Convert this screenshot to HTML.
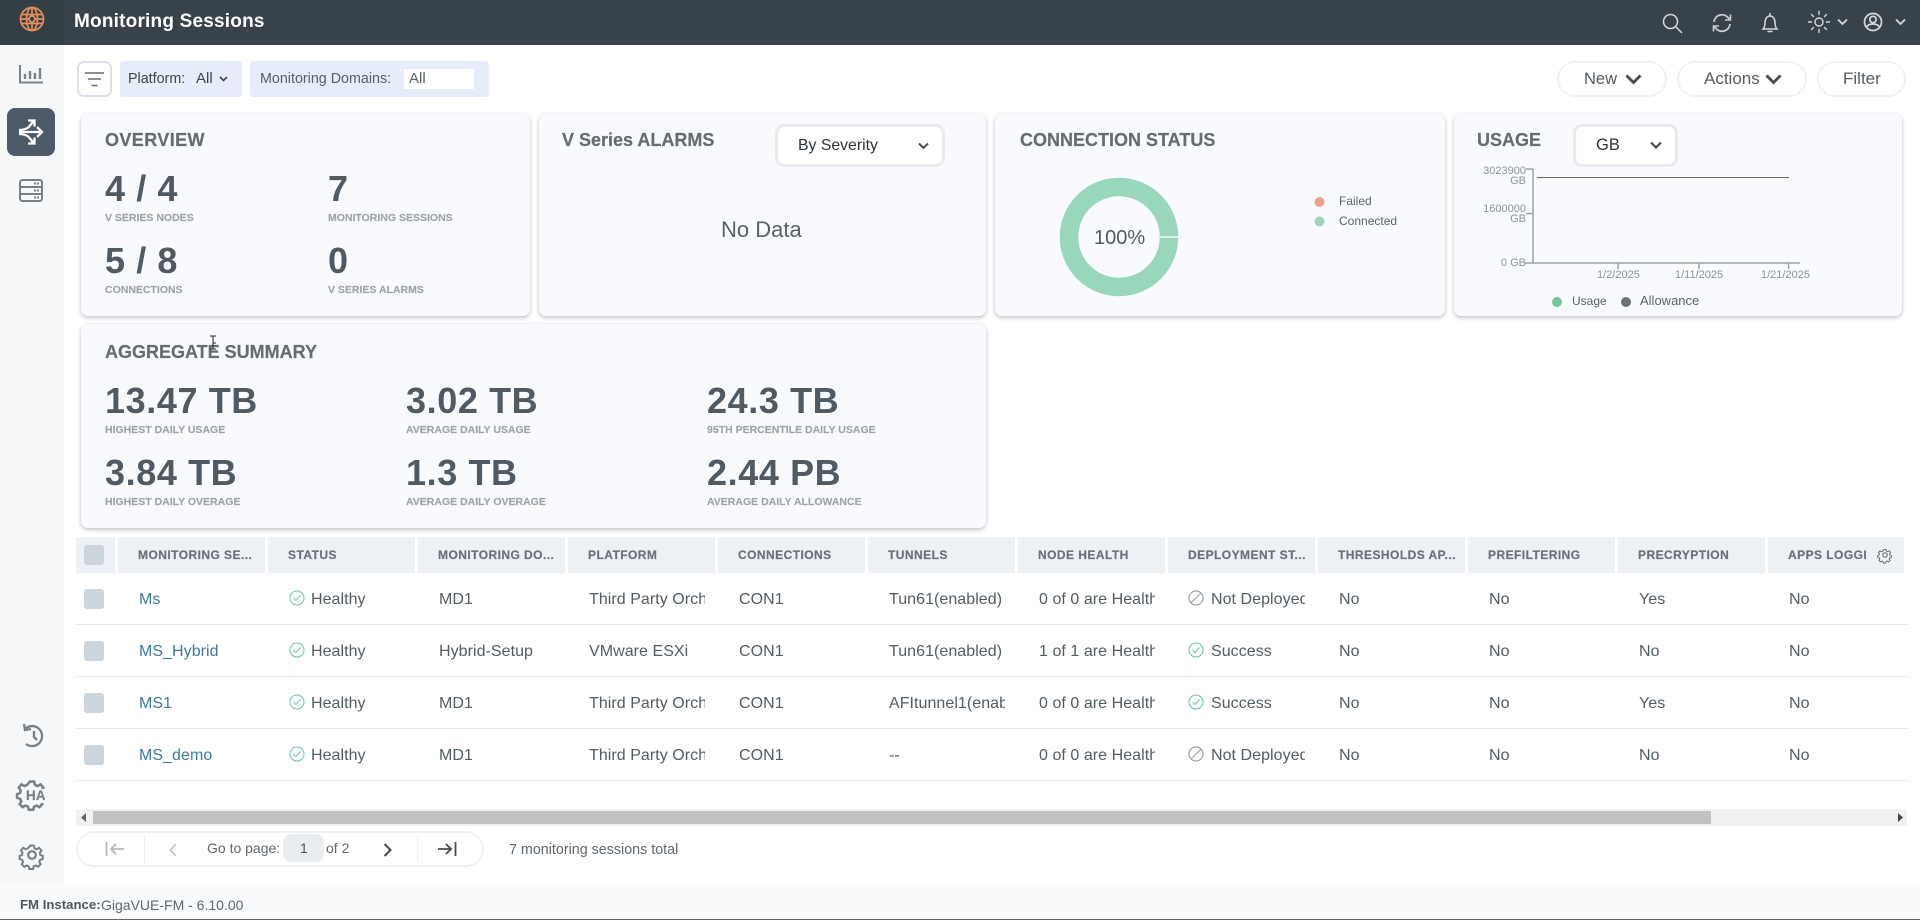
<!DOCTYPE html>
<html><head><meta charset="utf-8"><title>Monitoring Sessions</title>
<style>
html,body{margin:0;padding:0;width:1920px;height:920px;overflow:hidden;background:#fff;font-family:"Liberation Sans",sans-serif;color:#525c63}
div,span,a{position:absolute;white-space:nowrap;display:block}
svg{position:absolute;overflow:visible}
.t{line-height:20px;height:20px}
.card{background:#f9fafd;border-radius:7px;box-shadow:0 2px 4px rgba(60,70,80,.28),0 0 3px rgba(60,70,80,.08)}
.h{font-weight:bold;font-size:18px;color:#666c72;line-height:20px;height:20px;-webkit-text-stroke:.2px #666c72}
.v{font-weight:bold;font-size:36px;color:#4f5a64;line-height:40px;height:40px;letter-spacing:.6px}
.l{font-weight:bold;font-size:10.5px;color:#a0a4aa;line-height:14px;height:14px;-webkit-text-stroke:.15px #a0a4aa}
.sel{background:#fff;border:3px solid #e8eaef;border-radius:9px;box-sizing:border-box}
.pill{background:#fff;border:2px solid #f0f1f5;border-radius:18px;box-sizing:border-box}
.btn{font-size:17px;color:#555c63;line-height:20px;height:20px}
.th{top:537px;height:36px;background:#edf1f6}
.tht{font-weight:bold;font-size:12px;color:#6a7178;line-height:20px;top:545px;height:20px;letter-spacing:.45px;-webkit-text-stroke:.2px #6a7178}
.c{font-size:16px;letter-spacing:.05px;color:#525c63;line-height:20px;height:20px;overflow:hidden}
.a{color:#3d7a9e}
.cb{left:84px;width:20px;height:20px;background:#ccd5dc;border-radius:3px}
.sep{left:76px;width:1832px;height:1px;background:#e7e9ec}
.y{font-size:11px;color:#8b939a;line-height:12px;height:12px;text-align:right;width:60px;left:1466px}
.x{font-size:11px;color:#8b939a;line-height:12px;height:12px}
</style></head><body>

<!-- top bar -->
<div style="left:0;top:0;width:1920px;height:45px;background:#37424a"></div>
<div style="left:0;top:0;width:64px;height:45px;background:#333e45"></div>
<svg style="left:19px;top:6px" width="26" height="26" viewBox="0 0 26 26" fill="none" stroke="#e58f5c" stroke-width="1.7"><circle cx="13" cy="13" r="11.5"/><ellipse cx="13" cy="13" rx="5.5" ry="11.5"/><path d="M2.5 8.5h21M2.5 17.5h21M13 1.5v8M13 16.5v8M1.5 13h8M16.5 13h8"/><circle cx="13" cy="13" r="3"/></svg>
<div class="t" style="left:74px;top:12px;color:#fff;font-weight:bold;font-size:19px;letter-spacing:.2px">Monitoring Sessions</div>

<svg style="left:1660px;top:11px" width="24" height="24" viewBox="0 0 24 24" fill="none" stroke="#d5d9dc" stroke-width="1.500"><circle cx="10.5" cy="10.5" r="7"/><path d="M15.5 15.5l6 6" stroke-linecap="round"/></svg>
<svg style="left:1710px;top:11px" width="24" height="24" viewBox="0 0 24 24" fill="none" stroke="#c9ced2" stroke-width="1.800"><path d="M4 11a8 8 0 0 1 14-4.5l2 2M20 13a8 8 0 0 1-14 4.5l-2-2"/><path d="M20.500 3.500v5.500h-5.500M3.500 20.500v-5.500h5.500" stroke-width="1.600"/></svg>
<svg style="left:1758px;top:11px" width="24" height="24" viewBox="0 0 24 24" fill="none" stroke="#d5d9dc" stroke-width="1.500"><path d="M5 18c1.500-1.500 2-3 2-6.500 0-3.500 2-6.500 5-6.500s5 3 5 6.500c0 3.500 .5 5 2 6.500z"/><path d="M12 2.500v2.500M10 20.500h4" stroke-linecap="round"/></svg>
<svg style="left:1807px;top:10px" width="24" height="24" viewBox="0 0 24 24" fill="none" stroke="#d5d9dc" stroke-width="1.400" stroke-linecap="round"><circle cx="12" cy="12" r="4"/><path d="M12 1.500v3M12 19.500v3M1.500 12h3M19.500 12h3M4.500 4.500l2 2M17.500 17.500l2 2M4.500 19.500l2-2M17.500 6.500l2-2"/></svg>
<svg style="left:1837px;top:18px" width="11" height="8" viewBox="0 0 11 8" fill="none" stroke="#d5d9dc" stroke-width="1.800"><path d="M1 1.500l4.500 4.500 4.500-4.500"/></svg>
<svg style="left:1861px;top:10px" width="24" height="24" viewBox="0 0 24 24" fill="none" stroke="#d5d9dc" stroke-width="1.700"><circle cx="12" cy="12" r="8.500"/><circle cx="12" cy="9.500" r="3.200"/><path d="M5.500 17c1.500-2.500 4-3 6.500-3s5 .5 6.500 3"/></svg>
<svg style="left:1895px;top:18px" width="11" height="8" viewBox="0 0 11 8" fill="none" stroke="#d5d9dc" stroke-width="1.800"><path d="M1 1.500l4.500 4.500 4.500-4.500"/></svg>

<!-- sidebar -->
<div style="left:0;top:45px;width:64px;height:839px;background:#f6f7f9"></div>
<svg style="left:19px;top:65px" width="24" height="19" viewBox="0 0 24 19" fill="none" stroke="#7b8288" stroke-width="2"><path d="M1 0v17.500h23"/><path d="M6 14v-5M11 14V6M16 14V8M21 14V3" stroke-width="2.400"/></svg>
<div style="left:7px;top:108px;width:48px;height:48px;border-radius:8px;background:#4d5b68"></div>
<svg style="left:19px;top:119px" width="24" height="26" viewBox="0 0 24 26" fill="none" stroke="#fff" stroke-width="2.300"><path d="M0 13h23M18 8l5 5-5 5"/><path d="M0 11c5 0 9-1.500 11-4.500L15 1.500M9 1.500h6.500v6"/><path d="M0 15c5 0 9 1.500 11 4.500l4 5M9 24.500h6.500v-6"/></svg>
<svg style="left:19px;top:179px" width="24" height="23" viewBox="0 0 24 23" fill="none" stroke="#787f86" stroke-width="2"><rect x="1" y="1" width="22" height="21" rx="2.500"/><path d="M1 8h22M1 15h22"/><path d="M15 4.500h5M15 11.500h5M15 18.500h5" stroke-dasharray="2 1"/></svg>
<svg style="left:22px;top:723px" width="24" height="26" viewBox="0 0 24 26" fill="none" stroke="#787f86" stroke-width="2.300"><path d="M3 6a10 10 0 1 1 1 15"/><path d="M2 1l1 6 6-1"/><path d="M12 8v6l3 3"/></svg>
<svg style="left:19px;top:780px" width="26" height="26" viewBox="0 0 24 24" fill="none" stroke="#787f86" stroke-width="2.300"><path d="M10 1.500h4l.7 3 2.500 1.100 2.700-1.600 2.600 3-1.800 2.500.5 2.500 2.800 1v3.500l-2.900.9-1 2.300 1.500 2.600-2.800 2.800-2.600-1.500-2.300 1-.8 2.900h-4l-.8-2.900-2.300-1-2.600 1.500-2.800-2.800 1.500-2.600-1-2.300-2.900-.9v-3.500l2.800-1 .5-2.500-1.800-2.500 2.600-3 2.700 1.600 2.500-1.100z"/></svg>
<div style="left:24px;top:789px;width:24px;height:14px;background:#f6f7f9"></div>
<div style="left:26px;top:789px;font-size:13.500px;font-weight:bold;color:#787f86;line-height:14px;-webkit-text-stroke:.2px #787f86">HA</div>
<svg style="left:20px;top:843px" width="24" height="24" viewBox="0 0 24 24" fill="none" stroke="#787f86" stroke-width="2.200"><path d="M10 1.500h4l.7 3 2.500 1.100 2.700-1.600 2.600 3-1.800 2.500.5 2.500 2.800 1v3.500l-2.900.9-1 2.300 1.500 2.600-2.800 2.800-2.600-1.500-2.300 1-.8 2.900h-4l-.8-2.900-2.300-1-2.600 1.500-2.800-2.800 1.500-2.600-1-2.300-2.900-.9v-3.500l2.800-1 .5-2.500-1.800-2.500 2.600-3 2.700 1.600 2.500-1.100z" transform="translate(1.200 1.200) scale(.9)"/><circle cx="12" cy="12" r="3.800"/></svg>

<!-- toolbar -->
<div style="left:77px;top:61px;width:35px;height:36px;box-sizing:border-box;background:#fff;border:2.500px solid #dbe1ea;border-radius:7px"></div>
<svg style="left:85px;top:72px" width="19" height="15" viewBox="0 0 19 15" fill="none" stroke="#666c72" stroke-width="1.600"><path d="M0 1h19M3 7h13M6.500 13.500h6"/></svg>
<div style="left:120px;top:61px;width:122px;height:36px;background:#e6ecfa;border-radius:3px"></div>
<div class="t" style="left:128px;top:69px;font-size:14.300px;color:#3d464d">Platform:</div>
<div class="t" style="left:196px;top:69px;font-size:15px;color:#3d464d">All</div>
<svg style="left:219px;top:76px" width="9" height="7" viewBox="0 0 9 7" fill="none" stroke="#3d464d" stroke-width="1.600"><path d="M1 1l3.500 3.500L8 1"/></svg>
<div style="left:250px;top:61px;width:239px;height:36px;background:#e6ecfa;border-radius:3px"></div>
<div class="t" style="left:260px;top:69px;font-size:14.300px;color:#55606c">Monitoring Domains:</div>
<div style="left:404px;top:69px;width:70px;height:20px;background:#fff"></div>
<div class="t" style="left:409px;top:69px;font-size:15px;color:#55606c">All</div>

<div class="pill" style="left:1557px;top:61px;width:110px;height:36px"></div>
<div class="btn" style="left:1584px;top:69px;font-size:16.500px">New</div>
<svg style="left:1625px;top:74px" width="17" height="11" viewBox="0 0 17 11" fill="none" stroke="#444c53" stroke-width="2.800"><path d="M1.500 1.500l7 7 7-7"/></svg>
<div class="pill" style="left:1677px;top:61px;width:130px;height:36px"></div>
<div class="btn" style="left:1704px;top:69px">Actions</div>
<svg style="left:1765px;top:74px" width="17" height="11" viewBox="0 0 17 11" fill="none" stroke="#444c53" stroke-width="2.800"><path d="M1.500 1.500l7 7 7-7"/></svg>
<div class="pill" style="left:1817px;top:61px;width:89px;height:36px"></div>
<div class="btn" style="left:1843px;top:69px">Filter</div>

<!-- overview -->
<div class="card" style="left:81px;top:114px;width:449px;height:202px"></div>
<div class="h" style="left:105px;top:130px;letter-spacing:.4px">OVERVIEW</div>
<div class="v" style="left:105px;top:169px">4 / 4</div>
<div class="l" style="left:105px;top:211px">V SERIES NODES</div>
<div class="v" style="left:328px;top:169px">7</div>
<div class="l" style="left:328px;top:211px">MONITORING SESSIONS</div>
<div class="v" style="left:105px;top:241px">5 / 8</div>
<div class="l" style="left:105px;top:283px">CONNECTIONS</div>
<div class="v" style="left:328px;top:241px">0</div>
<div class="l" style="left:328px;top:283px">V SERIES ALARMS</div>

<!-- alarms -->
<div class="card" style="left:539px;top:114px;width:447px;height:202px"></div>
<div class="h" style="left:562px;top:130px">V Series ALARMS</div>
<div class="sel" style="left:775px;top:124px;width:170px;height:43px"></div>
<div class="t" style="left:798px;top:136px;font-size:15.800px;color:#2d3338">By Severity</div>
<svg style="left:918px;top:142px" width="11" height="8" viewBox="0 0 11 8" fill="none" stroke="#444c53" stroke-width="2"><path d="M1 1.500l4.500 4.500 4.500-4.500"/></svg>
<div class="t" style="left:721px;top:220px;font-size:22px;color:#58616a">No Data</div>

<!-- connection status -->
<div class="card" style="left:995px;top:114px;width:450px;height:202px"></div>
<div class="h" style="left:1020px;top:130px">CONNECTION STATUS</div>
<svg style="left:1050px;top:167px" width="140" height="140" viewBox="0 0 140 140"><circle cx="69" cy="70" r="50" fill="none" stroke="#98d7bc" stroke-width="18.500"/><path d="M110 70h19" stroke="#f0f6f3" stroke-width="1.500"/></svg>
<div class="t" style="left:1094px;top:228px;font-size:20px;width:50px;text-align:center;color:#4f5a64">100%</div>
<svg style="left:1314px;top:196px" width="12" height="32"><circle cx="5.500" cy="6" r="5" fill="#f4a08f"/><circle cx="5.500" cy="25.500" r="5" fill="#98d7bc"/></svg>
<div class="t" style="left:1339px;top:191px;font-size:12px;color:#5a6269">Failed</div>
<div class="t" style="left:1339px;top:211px;font-size:12px;color:#5a6269">Connected</div>

<!-- usage -->
<div class="card" style="left:1454px;top:114px;width:448px;height:202px"></div>
<div class="h" style="left:1477px;top:130px">USAGE</div>
<div class="sel" style="left:1573px;top:124px;width:105px;height:43px"></div>
<div class="t" style="left:1596px;top:135px;font-size:16.500px;color:#2d3338">GB</div>
<svg style="left:1650px;top:141px" width="12" height="9" viewBox="0 0 12 9" fill="none" stroke="#444c53" stroke-width="2.200"><path d="M1 1.500l5 5 5-5"/></svg>
<svg style="left:1520px;top:165px" width="290" height="110" fill="none"><path d="M13 4v94M5 98h275M6 4h7M6 48.500h7M98 98v6M179 98v6M268.500 98v6" stroke="#9ba1a7" stroke-width="1.500"/><path d="M17 12.500h252" stroke="#666" stroke-width="1"/></svg>
<div class="y" style="top:165px">3023900</div>
<div class="y" style="top:175px">GB</div>
<div class="y" style="top:203px">1600000</div>
<div class="y" style="top:213px">GB</div>
<div class="y" style="top:257px">0 GB</div>
<div class="x" style="left:1597px;top:269px">1/2/2025</div>
<div class="x" style="left:1675px;top:269px">1/11/2025</div>
<div class="x" style="left:1761px;top:269px">1/21/2025</div>
<svg style="left:1550px;top:296px" width="90" height="12"><circle cx="7" cy="6" r="5" fill="#6fc7a0"/><circle cx="76" cy="6" r="5" fill="#6c7177"/></svg>
<div class="t" style="left:1572px;top:291px;font-size:12px;color:#5a6269">Usage</div>
<div class="t" style="left:1640px;top:291px;font-size:13px;color:#5a6269">Allowance</div>

<!-- aggregate -->
<div class="card" style="left:81px;top:324px;width:905px;height:204px"></div>
<div class="h" style="left:105px;top:342px">AGGREGATE SUMMARY</div>
<div class="v" style="left:105px;top:381px">13.47 TB</div>
<div class="l" style="left:105px;top:423px">HIGHEST DAILY USAGE</div>
<div class="v" style="left:406px;top:381px">3.02 TB</div>
<div class="l" style="left:406px;top:423px">AVERAGE DAILY USAGE</div>
<div class="v" style="left:707px;top:381px">24.3 TB</div>
<div class="l" style="left:707px;top:423px">95TH PERCENTILE DAILY USAGE</div>
<div class="v" style="left:105px;top:453px">3.84 TB</div>
<div class="l" style="left:105px;top:495px">HIGHEST DAILY OVERAGE</div>
<div class="v" style="left:406px;top:453px">1.3 TB</div>
<div class="l" style="left:406px;top:495px">AVERAGE DAILY OVERAGE</div>
<div class="v" style="left:707px;top:453px">2.44 PB</div>
<div class="l" style="left:707px;top:495px">AVERAGE DAILY ALLOWANCE</div>
<svg style="left:209px;top:335px" width="8" height="16" fill="none" stroke="#222" stroke-width="1"><path d="M1 1h6M4 1v13M1 14h6M4 8h3"/></svg>

<!-- table header -->
<div class="th" style="left:76px;width:39px"></div>
<div class="th" style="left:118px;width:147px"></div>
<div class="th" style="left:268px;width:147px"></div>
<div class="th" style="left:418px;width:147px"></div>
<div class="th" style="left:568px;width:147px"></div>
<div class="th" style="left:718px;width:147px"></div>
<div class="th" style="left:868px;width:147px"></div>
<div class="th" style="left:1018px;width:147px"></div>
<div class="th" style="left:1168px;width:147px"></div>
<div class="th" style="left:1318px;width:147px"></div>
<div class="th" style="left:1468px;width:147px"></div>
<div class="th" style="left:1618px;width:147px"></div>
<div class="th" style="left:1768px;width:136px"></div>
<div class="cb" style="top:545px"></div>
<div class="tht" style="left:138px">MONITORING SE...</div>
<div class="tht" style="left:288px">STATUS</div>
<div class="tht" style="left:438px">MONITORING DO...</div>
<div class="tht" style="left:588px">PLATFORM</div>
<div class="tht" style="left:738px">CONNECTIONS</div>
<div class="tht" style="left:888px">TUNNELS</div>
<div class="tht" style="left:1038px">NODE HEALTH</div>
<div class="tht" style="left:1188px">DEPLOYMENT ST...</div>
<div class="tht" style="left:1338px">THRESHOLDS AP...</div>
<div class="tht" style="left:1488px">PREFILTERING</div>
<div class="tht" style="left:1638px">PRECRYPTION</div>
<div class="tht" style="left:1788px;width:78px;overflow:hidden">APPS LOGGI</div>
<svg style="left:1878px;top:548px" width="14" height="14" viewBox="0 0 24 24" fill="none" stroke="#6a7178" stroke-width="2"><path d="M10 1.500h4l.7 3 2.500 1.100 2.700-1.600 2.600 3-1.800 2.500.5 2.500 2.800 1v3.500l-2.900.9-1 2.300 1.500 2.600-2.800 2.800-2.600-1.500-2.300 1-.8 2.900h-4l-.8-2.900-2.300-1-2.600 1.500-2.800-2.800 1.500-2.600-1-2.300-2.900-.9v-3.500l2.800-1 .5-2.500-1.800-2.500 2.600-3 2.700 1.600 2.500-1.100z" transform="translate(1.200 1.200) scale(.9)"/><circle cx="12" cy="12" r="3.800"/></svg>

<!-- row 1 -->
<div class="cb" style="top:589px"></div>
<div class="c a" style="left:139px;top:590px">Ms</div>
<svg style="left:289px;top:590px" width="16" height="16" viewBox="0 0 16 16" fill="none" stroke="#6ecba6" stroke-width="1.100"><circle cx="8" cy="8" r="7"/><path d="M4.500 8l2.500 2.500 4.500-5"/></svg>
<div class="c" style="left:311px;top:590px">Healthy</div>
<div class="c" style="left:439px;top:590px">MD1</div>
<div class="c" style="left:589px;top:590px;width:116px">Third Party Orchestration</div>
<div class="c" style="left:739px;top:590px">CON1</div>
<div class="c" style="left:889px;top:590px;width:116px">Tun61(enabled)</div>
<div class="c" style="left:1039px;top:590px;width:116px">0 of 0 are Healthy</div>
<svg style="left:1188px;top:590px" width="16" height="16" viewBox="0 0 16 16" fill="none" stroke="#9aa3ab" stroke-width="1.200"><circle cx="8" cy="8" r="7"/><path d="M3 13L13 3"/></svg>
<div class="c" style="left:1211px;top:590px;width:94px">Not Deployed</div>
<div class="c" style="left:1339px;top:590px">No</div>
<div class="c" style="left:1489px;top:590px">No</div>
<div class="c" style="left:1639px;top:590px">Yes</div>
<div class="c" style="left:1789px;top:590px">No</div>
<div class="sep" style="top:624px"></div>

<!-- row 2 -->
<div class="cb" style="top:641px"></div>
<div class="c a" style="left:139px;top:642px">MS_Hybrid</div>
<svg style="left:289px;top:642px" width="16" height="16" viewBox="0 0 16 16" fill="none" stroke="#6ecba6" stroke-width="1.100"><circle cx="8" cy="8" r="7"/><path d="M4.500 8l2.500 2.500 4.500-5"/></svg>
<div class="c" style="left:311px;top:642px">Healthy</div>
<div class="c" style="left:439px;top:642px">Hybrid-Setup</div>
<div class="c" style="left:589px;top:642px;width:116px">VMware ESXi</div>
<div class="c" style="left:739px;top:642px">CON1</div>
<div class="c" style="left:889px;top:642px;width:116px">Tun61(enabled)</div>
<div class="c" style="left:1039px;top:642px;width:116px">1 of 1 are Healthy</div>
<svg style="left:1188px;top:642px" width="16" height="16" viewBox="0 0 16 16" fill="none" stroke="#6ecba6" stroke-width="1.100"><circle cx="8" cy="8" r="7"/><path d="M4.500 8l2.500 2.500 4.500-5"/></svg>
<div class="c" style="left:1211px;top:642px;width:94px">Success</div>
<div class="c" style="left:1339px;top:642px">No</div>
<div class="c" style="left:1489px;top:642px">No</div>
<div class="c" style="left:1639px;top:642px">No</div>
<div class="c" style="left:1789px;top:642px">No</div>
<div class="sep" style="top:676px"></div>

<!-- row 3 -->
<div class="cb" style="top:693px"></div>
<div class="c a" style="left:139px;top:694px">MS1</div>
<svg style="left:289px;top:694px" width="16" height="16" viewBox="0 0 16 16" fill="none" stroke="#6ecba6" stroke-width="1.100"><circle cx="8" cy="8" r="7"/><path d="M4.500 8l2.500 2.500 4.500-5"/></svg>
<div class="c" style="left:311px;top:694px">Healthy</div>
<div class="c" style="left:439px;top:694px">MD1</div>
<div class="c" style="left:589px;top:694px;width:116px">Third Party Orchestration</div>
<div class="c" style="left:739px;top:694px">CON1</div>
<div class="c" style="left:889px;top:694px;width:116px">AFItunnel1(enabled)</div>
<div class="c" style="left:1039px;top:694px;width:116px">0 of 0 are Healthy</div>
<svg style="left:1188px;top:694px" width="16" height="16" viewBox="0 0 16 16" fill="none" stroke="#6ecba6" stroke-width="1.100"><circle cx="8" cy="8" r="7"/><path d="M4.500 8l2.500 2.500 4.500-5"/></svg>
<div class="c" style="left:1211px;top:694px;width:94px">Success</div>
<div class="c" style="left:1339px;top:694px">No</div>
<div class="c" style="left:1489px;top:694px">No</div>
<div class="c" style="left:1639px;top:694px">Yes</div>
<div class="c" style="left:1789px;top:694px">No</div>
<div class="sep" style="top:728px"></div>

<!-- row 4 -->
<div class="cb" style="top:745px"></div>
<div class="c a" style="left:139px;top:746px">MS_demo</div>
<svg style="left:289px;top:746px" width="16" height="16" viewBox="0 0 16 16" fill="none" stroke="#6ecba6" stroke-width="1.100"><circle cx="8" cy="8" r="7"/><path d="M4.500 8l2.500 2.500 4.500-5"/></svg>
<div class="c" style="left:311px;top:746px">Healthy</div>
<div class="c" style="left:439px;top:746px">MD1</div>
<div class="c" style="left:589px;top:746px;width:116px">Third Party Orchestration</div>
<div class="c" style="left:739px;top:746px">CON1</div>
<div class="c" style="left:889px;top:746px;width:116px">--</div>
<div class="c" style="left:1039px;top:746px;width:116px">0 of 0 are Healthy</div>
<svg style="left:1188px;top:746px" width="16" height="16" viewBox="0 0 16 16" fill="none" stroke="#9aa3ab" stroke-width="1.200"><circle cx="8" cy="8" r="7"/><path d="M3 13L13 3"/></svg>
<div class="c" style="left:1211px;top:746px;width:94px">Not Deployed</div>
<div class="c" style="left:1339px;top:746px">No</div>
<div class="c" style="left:1489px;top:746px">No</div>
<div class="c" style="left:1639px;top:746px">No</div>
<div class="c" style="left:1789px;top:746px">No</div>
<div class="sep" style="top:780px"></div>

<!-- scrollbar -->
<div style="left:76px;top:809px;width:1831px;height:17px;background:#f1f1f3"></div>
<div style="left:93px;top:811px;width:1618px;height:13px;background:#c1c1c3"></div>
<svg style="left:81px;top:813px" width="6" height="9"><path d="M5 0v9L0 4.500z" fill="#666"/></svg>
<svg style="left:1897px;top:813px" width="6" height="9"><path d="M1 0v9l5-4.500z" fill="#444"/></svg>

<!-- pagination -->
<div class="pill" style="left:76px;top:831px;width:408px;height:36px"></div>
<svg style="left:105px;top:841px" width="20" height="16" viewBox="0 0 20 16" fill="none" stroke="#b4b9be" stroke-width="1.800"><path d="M1.500 1v14M19 8H6M11 3L6 8l5 5"/></svg>
<div style="left:144px;top:836px;width:1px;height:26px;background:#eceef0"></div>
<svg style="left:169px;top:843px" width="8" height="14" viewBox="0 0 8 14" fill="none" stroke="#c4c8cc" stroke-width="1.800"><path d="M7 1L1.500 7 7 13"/></svg>
<div class="t" style="left:207px;top:838px;font-size:14px;color:#5f676e">Go to page:</div>
<div style="left:283px;top:834px;width:41px;height:28px;background:#e9edf2;border-radius:8px"></div>
<div class="t" style="left:300px;top:838px;font-size:14px;color:#4a5259">1</div>
<div class="t" style="left:326px;top:838px;font-size:14px;color:#5f676e">of 2</div>
<svg style="left:383px;top:843px" width="9" height="14" viewBox="0 0 9 14" fill="none" stroke="#444c53" stroke-width="2"><path d="M1.500 1L7.500 7 1.500 13"/></svg>
<div style="left:417px;top:836px;width:1px;height:26px;background:#eceef0"></div>
<svg style="left:437px;top:841px" width="20" height="16" viewBox="0 0 20 16" fill="none" stroke="#444c53" stroke-width="1.800"><path d="M18.500 1v14M1 8h13M9 3l5 5-5 5"/></svg>
<div class="t" style="left:509px;top:840px;font-size:14.300px;color:#5f676e">7 monitoring sessions total</div>

<!-- footer -->
<div style="left:0;top:884px;width:1920px;height:35px;background:#f9fafc"></div>
<div style="left:0;top:919px;width:1920px;height:1px;background:#666"></div>
<div class="t" style="left:20px;top:895px;font-size:13.200px;font-weight:bold;color:#50585f">FM Instance:</div>
<div class="t" style="left:101px;top:895px;font-size:14px;color:#5f676e">GigaVUE-FM - 6.10.00</div>

</body></html>
